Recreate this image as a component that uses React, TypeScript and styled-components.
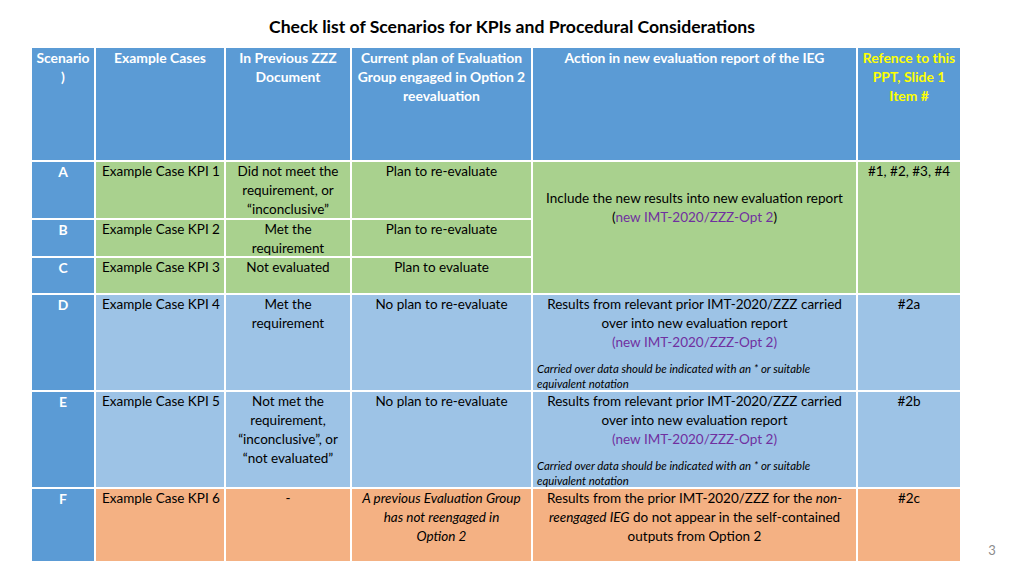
import styled, { createGlobalStyle } from "styled-components";

const GlobalStyle = createGlobalStyle`
  html, body {
    margin: 0;
    padding: 0;
    background: #ffffff;
  }
  body {
    font-family: Lato, "Open Sans", "Liberation Sans", sans-serif;
    color: #000;
  }
`;

type Tone = "head" | "scen" | "green" | "blue" | "orange";

const toneBg: Record<Tone, string> = {
  head: "#5b9bd5",
  scen: "#5b9bd5",
  green: "#a9d18e",
  blue: "#9dc3e6",
  orange: "#f4b183",
};

const Slide = styled.div`
  width: 1024px;
  height: 576px;
  box-sizing: border-box;
  padding-top: 17px;
  display: flex;
  flex-direction: column;
  overflow: hidden;
`;

const Title = styled.h1`
  margin: 0 0 11px;
  font-size: 17.6px;
  line-height: 20px;
  font-weight: 700;
  text-align: center;
`;

const Body = styled.div`
  display: flex;
  align-items: flex-end;
  padding-left: 32px;
`;

const Table = styled.div`
  display: grid;
  grid-template-columns: 62px 128px 124px 179px 323px 102px;
  grid-template-rows: 112px 56px 36px 35px 95px 95px 72px;
  gap: 2px;
  width: 928px;
  background: #ffffff;
`;

const Cell = styled.div<{ $tone: Tone; $align?: "left" | "center"; $rows?: number; $top?: number }>`
  background: ${(p) => toneBg[p.$tone]};
  grid-row: ${(p) => (p.$rows ? `span ${p.$rows}` : "auto")};
  padding: ${(p) => p.$top ?? 0}px 4px 0 ${(p) => (p.$align === "left" ? 6 : 4)}px;
  text-align: ${(p) => p.$align ?? "center"};
  font-size: ${(p) => (p.$tone === "head" || p.$tone === "scen" ? 13.9 : 13.5)}px;
  line-height: 19px;
  color: ${(p) => (p.$tone === "head" || p.$tone === "scen" ? "#ffffff" : "#000000")};
  font-weight: ${(p) => (p.$tone === "head" || p.$tone === "scen" ? 700 : 400)};
  white-space: nowrap;
  overflow: hidden;
`;

const Yellow = styled.span`
  color: #ffff00;
`;

const Purple = styled.span`
  color: #7030a0;
`;

const Note = styled.div`
  margin-top: 9px;
  text-align: left;
  font-size: 11.4px;
  line-height: 15px;
  font-style: italic;
`;

const PageNum = styled.div`
  width: 64px;
  text-align: center;
  font-size: 13px;
  color: #8c8c8c;
  margin-bottom: 3px;
`;

const App = () => {
  const carried = (tone: Tone, ref: string) => (
    <>
      <Cell $tone={tone}>
        Results from relevant prior IMT-2020/ZZZ carried
        <br />
        over into new evaluation report
        <br />
        <Purple>(new IMT-2020/ZZZ-Opt 2)</Purple>
        <Note>
          Carried over data should be indicated with an * or suitable
          <br />
          equivalent notation
        </Note>
      </Cell>
      <Cell $tone={tone}>{ref}</Cell>
    </>
  );

  return (
    <>
      <GlobalStyle />
      <Slide>
        <Title>Check list of Scenarios for KPIs and Procedural Considerations</Title>
        <Body>
          <Table>
            <Cell $tone="head">
              Scenario
              <br />)
            </Cell>
            <Cell $tone="head">Example Cases</Cell>
            <Cell $tone="head">
              In Previous ZZZ
              <br />
              Document
            </Cell>
            <Cell $tone="head">
              Current plan of Evaluation
              <br />
              Group engaged in Option 2
              <br />
              reevaluation
            </Cell>
            <Cell $tone="head">Action in new evaluation report of the IEG</Cell>
            <Cell $tone="head">
              <Yellow>
                Refence to this
                <br />
                PPT, Slide 1
                <br />
                Item #
              </Yellow>
            </Cell>

            <Cell $tone="scen">A</Cell>
            <Cell $tone="green" $align="left">Example Case KPI 1</Cell>
            <Cell $tone="green">
              Did not meet the
              <br />
              requirement, or
              <br />
              “inconclusive”
            </Cell>
            <Cell $tone="green">Plan to re-evaluate</Cell>
            <Cell $tone="green" $rows={3} $top={27}>
              Include the new results into new evaluation report
              <br />(<Purple>new IMT-2020/ZZZ-Opt 2</Purple>)
            </Cell>
            <Cell $tone="green" $rows={3}>#1, #2, #3, #4</Cell>

            <Cell $tone="scen">B</Cell>
            <Cell $tone="green" $align="left">Example Case KPI 2</Cell>
            <Cell $tone="green">
              Met the
              <br />
              requirement
            </Cell>
            <Cell $tone="green">Plan to re-evaluate</Cell>

            <Cell $tone="scen">C</Cell>
            <Cell $tone="green" $align="left">Example Case KPI 3</Cell>
            <Cell $tone="green">Not evaluated</Cell>
            <Cell $tone="green">Plan to evaluate</Cell>

            <Cell $tone="scen">D</Cell>
            <Cell $tone="blue" $align="left">Example Case KPI 4</Cell>
            <Cell $tone="blue">
              Met the
              <br />
              requirement
            </Cell>
            <Cell $tone="blue">No plan to re-evaluate</Cell>
            {carried("blue", "#2a")}

            <Cell $tone="scen">E</Cell>
            <Cell $tone="blue" $align="left">Example Case KPI 5</Cell>
            <Cell $tone="blue">
              Not met the
              <br />
              requirement,
              <br />
              “inconclusive”, or
              <br />
              “not evaluated”
            </Cell>
            <Cell $tone="blue">No plan to re-evaluate</Cell>
            {carried("blue", "#2b")}

            <Cell $tone="scen">F</Cell>
            <Cell $tone="orange" $align="left">Example Case KPI 6</Cell>
            <Cell $tone="orange">-</Cell>
            <Cell $tone="orange">
              <i>
                A previous Evaluation Group
                <br />
                has not reengaged in
                <br />
                Option 2
              </i>
            </Cell>
            <Cell $tone="orange">
              Results from the prior IMT-2020/ZZZ for the <i>non-</i>
              <br />
              <i>reengaged IEG</i> do not appear in the self-contained
              <br />
              outputs from Option 2
            </Cell>
            <Cell $tone="orange">#2c</Cell>
          </Table>
          <PageNum>3</PageNum>
        </Body>
      </Slide>
    </>
  );
};

export default App;
